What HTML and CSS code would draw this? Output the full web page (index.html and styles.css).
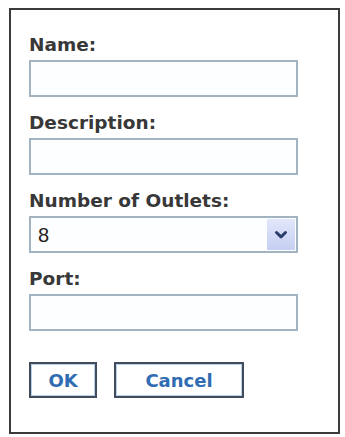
FILE: index.html
```html
<!DOCTYPE html>
<html>
<head>
<meta charset="utf-8">
<link rel="stylesheet" href="styles.css">
</head>
<body>
<form class="dialog">
  <label class="label">Name:</label>
  <input class="field" type="text">
  <label class="label">Description:</label>
  <input class="field" type="text">
  <label class="label">Number of Outlets:</label>
  <div class="select-wrap">
    <select class="field select">
      <option>8</option>
    </select>
    <span class="arrow">
      <svg width="14" height="10" viewBox="0 0 14 10"><path d="M2.5 2.5 L7 6.8 L11.5 2.5" fill="none" stroke="#2b3d6a" stroke-width="3" stroke-linecap="round" stroke-linejoin="round"/></svg>
    </span>
  </div>
  <label class="label">Port:</label>
  <input class="field" type="text">
  <div class="buttons">
    <button type="button" class="btn btn-ok">OK</button>
    <button type="button" class="btn btn-cancel">Cancel</button>
  </div>
</form>
</body>
</html>
```
FILE: styles.css
```css
html, body {
  margin: 0;
  padding: 0;
  background: #ffffff;
}
body {
  padding: 8px 0 0 9px;
}
.dialog {
  box-sizing: border-box;
  width: 331px;
  height: 426px;
  border: 2px solid #3b3b3b;
  padding: 24px 0 0 18px;
  display: flex;
  flex-direction: column;
  align-items: flex-start;
  font-family: "DejaVu Sans", Verdana, sans-serif;
  background: #ffffff;
}
.label {
  display: block;
  font-weight: bold;
  font-size: 18.5px;
  line-height: 22px;
  color: #383838;
  margin-bottom: 4px;
}
.field {
  box-sizing: border-box;
  width: 269px;
  height: 37px;
  margin: 0 0 15px 0;
  border: 2px solid #a2b3c2;
  background: #fdfeff;
  outline: none;
  padding: 0 6px;
  font-family: "Liberation Sans", Arial, sans-serif;
  font-size: 20px;
  color: #222222;
}
.select-wrap {
  position: relative;
  width: 269px;
  height: 37px;
  margin-bottom: 15px;
}
.select {
  appearance: none;
  -webkit-appearance: none;
  margin: 0;
  border-radius: 0;
  padding-left: 7px;
}
.arrow {
  position: absolute;
  top: 3px;
  right: 3px;
  width: 28px;
  height: 31px;
  background: linear-gradient(#e2e7fa, #c6cff3);
  display: flex;
  align-items: center;
  justify-content: center;
  pointer-events: none;
}
.buttons {
  display: flex;
  gap: 17px;
  margin-top: 16px;
}
.btn {
  box-sizing: border-box;
  height: 36px;
  border: 2px solid #414b59;
  box-shadow: inset 0 0 0 1px #b9d3ec;
  background: #ffffff;
  color: #2f6cb2;
  font-family: "DejaVu Sans", Verdana, sans-serif;
  font-weight: bold;
  font-size: 18px;
  padding: 0;
  border-radius: 0;
}
.btn-ok {
  width: 68px;
}
.btn-cancel {
  width: 130px;
}
```
